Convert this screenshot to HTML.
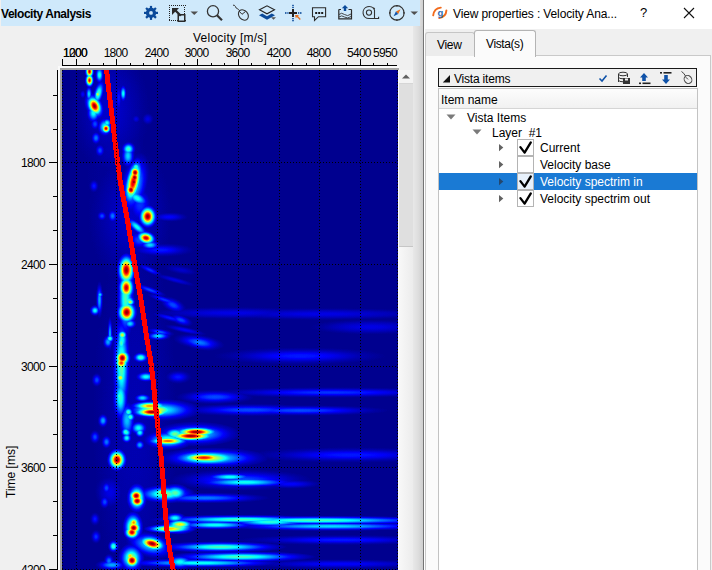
<!DOCTYPE html>
<html><head><meta charset="utf-8"><style>
html,body{margin:0;padding:0;width:712px;height:570px;overflow:hidden;background:#f0f0f0;}
body{position:relative;font-family:"Liberation Sans",sans-serif;color:#000;}
.a{position:absolute;white-space:pre;}
#tb{left:1px;top:0;width:419px;height:26px;background:#cfe9fb;}
#title{left:1px;top:6.5px;font-weight:bold;font-size:12px;letter-spacing:-0.45px;color:#000;}
.tl{font-size:12px;letter-spacing:-0.7px;line-height:13px;}
#split{left:413px;top:26px;width:10px;height:544px;background:linear-gradient(to right,#e8e8e8,#dedede 50%,#cfcfcf);}
#split2{left:420px;top:0;width:3px;height:26px;background:linear-gradient(to right,#dcdcdc,#d0d0d0);}
#sline{left:423px;top:0;width:1px;height:570px;background:#747474;}
#rp{left:424px;top:0;width:288px;height:570px;background:#f0f0f0;}
#rtitle{left:424px;top:0;width:288px;height:29px;background:#fff;}
.t12{font-size:12px;line-height:14px;}
.r12{font-size:12px;line-height:16.5px;}
</style></head><body>
<div class="a" id="tb"></div>
<div class="a" id="title">Velocity Analysis</div>
<div class="a" id="split"></div>
<div class="a" id="split2"></div>
<div class="a" id="rp"></div>
<div class="a" id="rtitle"></div>
<div class="a" id="sline"></div>
<svg class="a" style="left:0;top:0" width="420" height="26">
<g transform="translate(151,12.9)" fill="#0b4a9a"><rect x="-1.1" y="-7" width="2.2" height="3" transform="rotate(0)"/><rect x="-1.1" y="-7" width="2.2" height="3" transform="rotate(45)"/><rect x="-1.1" y="-7" width="2.2" height="3" transform="rotate(90)"/><rect x="-1.1" y="-7" width="2.2" height="3" transform="rotate(135)"/><rect x="-1.1" y="-7" width="2.2" height="3" transform="rotate(180)"/><rect x="-1.1" y="-7" width="2.2" height="3" transform="rotate(225)"/><rect x="-1.1" y="-7" width="2.2" height="3" transform="rotate(270)"/><rect x="-1.1" y="-7" width="2.2" height="3" transform="rotate(315)"/><circle r="5.1"/><circle r="1.9" fill="#cfe9fb"/></g>
<g fill="#222"><rect x="169" y="5" width="1" height="1"/><rect x="169" y="20" width="1" height="1"/><rect x="171" y="5" width="1" height="1"/><rect x="171" y="20" width="1" height="1"/><rect x="173" y="5" width="1" height="1"/><rect x="173" y="20" width="1" height="1"/><rect x="175" y="5" width="1" height="1"/><rect x="175" y="20" width="1" height="1"/><rect x="177" y="5" width="1" height="1"/><rect x="177" y="20" width="1" height="1"/><rect x="179" y="5" width="1" height="1"/><rect x="179" y="20" width="1" height="1"/><rect x="181" y="5" width="1" height="1"/><rect x="181" y="20" width="1" height="1"/><rect x="183" y="5" width="1" height="1"/><rect x="183" y="20" width="1" height="1"/><rect x="185" y="5" width="1" height="1"/><rect x="185" y="20" width="1" height="1"/><rect x="169" y="7" width="1" height="1"/><rect x="184" y="7" width="1" height="1"/><rect x="169" y="9" width="1" height="1"/><rect x="184" y="9" width="1" height="1"/><rect x="169" y="11" width="1" height="1"/><rect x="184" y="11" width="1" height="1"/><rect x="169" y="13" width="1" height="1"/><rect x="184" y="13" width="1" height="1"/><rect x="169" y="15" width="1" height="1"/><rect x="184" y="15" width="1" height="1"/><rect x="169" y="17" width="1" height="1"/><rect x="184" y="17" width="1" height="1"/><rect x="169" y="19" width="1" height="1"/><rect x="184" y="19" width="1" height="1"/></g>
<rect x="178.25" y="14.75" width="6.5" height="6.5" fill="#cfe9fb" stroke="#2a2a2a" stroke-width="1.5"/>
<path d="M172 8 L179 8 L176.8 10.2 L181.6 15 L180 16.6 L175.2 11.8 L172 15 Z" fill="#2a2a2a"/>
<path d="M190.5 11.5 L198 11.5 L194.25 15 Z" fill="#505050"/>
<g fill="none" stroke="#333">
<circle cx="213" cy="11.3" r="5.6" stroke-width="1.3"/>
<path d="M217 15.3 L222 20.3" stroke-width="2.2"/>
<path d="M233 5.2 Q234.5 4.8 235.3 6.3 Q236 8.5 237.2 8.6 Q238.5 9 239.8 11" stroke-width="1"/>
<ellipse cx="243.4" cy="15" rx="4.4" ry="5.7" transform="rotate(-40 243.4 15)" stroke-width="1.1"/>
<path d="M239.3 11.3 L242 14.3 L245.4 11.6" stroke-width="1"/>
</g>
<path d="M259.5 9.8 L267 5.8 L274.5 9.8 L267 13.8 Z" fill="none" stroke="#222" stroke-width="1.1"/>
<path d="M259 15.2 L262.2 13.4 L267 16.2 L271.8 13.4 L275 15.2 L267 19.8 Z" fill="#0b4a9a"/>
<path d="M271 17.3 L276 17.3 L273.5 19.8 Z" fill="#555"/>
<g fill="#222"><rect x="289" y="12" width="8" height="2"/><rect x="292" y="9" width="2" height="8"/></g>
<g fill="#0b4a9a"><rect x="285" y="12.2" width="1.5" height="1.6"/><rect x="287.3" y="12.2" width="1.3" height="1.6"/><rect x="298" y="12.2" width="1.3" height="1.6"/><rect x="300" y="12.2" width="1.5" height="1.6"/>
<rect x="292.2" y="4.8" width="1.6" height="1.3"/><rect x="292.2" y="6.8" width="1.6" height="1.3"/><rect x="292.2" y="18" width="1.6" height="1.3"/><rect x="292.2" y="20" width="1.6" height="1.3"/></g>
<path d="M295 15 L299 15 L297.9 16.1 L300.8 19 L299.8 20 L296.9 17.1 L295.8 18.2 Z" fill="#e8711e"/>
<path d="M312.5 7.8 H325.6 V16.7 H318.5 L314.5 20.5 V16.7 H312.5 Z" fill="none" stroke="#2a2a2a" stroke-width="1.1" stroke-linejoin="miter"/>
<g fill="#1a1a1a"><rect x="315.2" y="12" width="2" height="2"/><rect x="318.2" y="12" width="2" height="2"/><rect x="321.2" y="12" width="2" height="2"/></g>
<path d="M338.8 9.5 V18.8 H351.5 V9.5" fill="none" stroke="#2a2a2a" stroke-width="1.2"/>
<path d="M338.8 9.5 H341 M348.5 9.5 H351.5" stroke="#2a2a2a" stroke-width="1.2"/>
<path d="M339 14.5 Q341.5 12 344.5 14.5 T351 14 M339 17 Q341.5 14.8 344.5 17 T351 16.5" fill="none" stroke="#333" stroke-width="0.9"/>
<path d="M345 5 L348.2 8.2 L346.2 8.2 L346.2 11 L343.8 11 L343.8 8.2 L341.8 8.2 Z" fill="#0b4a9a"/>
<g fill="none" stroke="#333" stroke-width="1.1">
<path d="M374.5 18.5 V10 A6 6 0 1 0 369 18.5 H378.6 V16.8"/>
<circle cx="369" cy="12.6" r="2.6"/>
<path d="M373.4 7.6 L374.8 8.8"/>
</g>
<circle cx="396.9" cy="12.9" r="7.2" fill="none" stroke="#333" stroke-width="1.15"/>
<g fill="#333"><rect x="396.2" y="5" width="1.4" height="1.6"/><rect x="396.2" y="19.2" width="1.4" height="1.6"/><rect x="389.1" y="12.2" width="1.6" height="1.4"/><rect x="403.1" y="12.2" width="1.6" height="1.4"/></g>
<path d="M400.6 9.2 L398.2 13.9 L395.9 11.6 Z" fill="#e8711e"/>
<path d="M393.6 16.2 L395.9 11.6 L398.2 13.9 Z" fill="#0f52a8"/>
<path d="M410.5 11.5 L418 11.5 L414.25 15 Z" fill="#505050"/>
</svg>
<svg class="a" style="left:0;top:0" width="423" height="570"><g stroke="#000" stroke-width="1" shape-rendering="crispEdges"><line x1="62" y1="65.5" x2="397" y2="65.5"/><line x1="57.5" y1="70" x2="57.5" y2="570"/><line x1="62.5" y1="59" x2="62.5" y2="65"/><line x1="76.5" y1="59" x2="76.5" y2="65"/><line x1="89.5" y1="63" x2="89.5" y2="65"/><line x1="103.5" y1="63" x2="103.5" y2="65"/><line x1="116.5" y1="59" x2="116.5" y2="65"/><line x1="130.5" y1="63" x2="130.5" y2="65"/><line x1="143.5" y1="63" x2="143.5" y2="65"/><line x1="157.5" y1="59" x2="157.5" y2="65"/><line x1="170.5" y1="63" x2="170.5" y2="65"/><line x1="184.5" y1="63" x2="184.5" y2="65"/><line x1="197.5" y1="59" x2="197.5" y2="65"/><line x1="211.5" y1="63" x2="211.5" y2="65"/><line x1="224.5" y1="63" x2="224.5" y2="65"/><line x1="238.5" y1="59" x2="238.5" y2="65"/><line x1="251.5" y1="63" x2="251.5" y2="65"/><line x1="265.5" y1="63" x2="265.5" y2="65"/><line x1="279.5" y1="59" x2="279.5" y2="65"/><line x1="292.5" y1="63" x2="292.5" y2="65"/><line x1="306.5" y1="63" x2="306.5" y2="65"/><line x1="319.5" y1="59" x2="319.5" y2="65"/><line x1="333.5" y1="63" x2="333.5" y2="65"/><line x1="346.5" y1="63" x2="346.5" y2="65"/><line x1="360.5" y1="59" x2="360.5" y2="65"/><line x1="373.5" y1="63" x2="373.5" y2="65"/><line x1="387.5" y1="63" x2="387.5" y2="65"/><line x1="53" y1="95.5" x2="57" y2="95.5"/><line x1="53" y1="129.5" x2="57" y2="129.5"/><line x1="49" y1="162.5" x2="57" y2="162.5"/><line x1="53" y1="196.5" x2="57" y2="196.5"/><line x1="53" y1="230.5" x2="57" y2="230.5"/><line x1="49" y1="264.5" x2="57" y2="264.5"/><line x1="53" y1="298.5" x2="57" y2="298.5"/><line x1="53" y1="332.5" x2="57" y2="332.5"/><line x1="49" y1="366.5" x2="57" y2="366.5"/><line x1="53" y1="400.5" x2="57" y2="400.5"/><line x1="53" y1="434.5" x2="57" y2="434.5"/><line x1="49" y1="467.5" x2="57" y2="467.5"/><line x1="53" y1="501.5" x2="57" y2="501.5"/><line x1="53" y1="535.5" x2="57" y2="535.5"/><line x1="49" y1="569.5" x2="57" y2="569.5"/></g></svg>
<div class="a tl" style="left:100.6px;top:47px;width:30px;text-align:center">1800</div>
<div class="a tl" style="left:141.6px;top:47px;width:30px;text-align:center">2400</div>
<div class="a tl" style="left:181.6px;top:47px;width:30px;text-align:center">3000</div>
<div class="a tl" style="left:222.6px;top:47px;width:30px;text-align:center">3600</div>
<div class="a tl" style="left:263.6px;top:47px;width:30px;text-align:center">4200</div>
<div class="a tl" style="left:303.6px;top:47px;width:30px;text-align:center">4800</div>
<div class="a tl" style="left:343.9px;top:47px;width:30px;text-align:center">5400</div>
<div class="a tl" style="left:63px;top:47px">1000</div>
<div class="a tl" style="left:63px;top:47px">1200</div>
<div class="a tl" style="left:347px;top:47px;width:50px;text-align:right">5950</div>
<div class="a t12" style="left:193px;top:31px;letter-spacing:0.25px">Velocity [m/s]</div>
<div class="a tl" style="left:0px;width:45px;text-align:right;top:157.0px">1800</div>
<div class="a tl" style="left:0px;width:45px;text-align:right;top:259.0px">2400</div>
<div class="a tl" style="left:0px;width:45px;text-align:right;top:361.0px">3000</div>
<div class="a tl" style="left:0px;width:45px;text-align:right;top:462.0px">3600</div>
<div class="a tl" style="left:0px;width:45px;text-align:right;top:564.0px">4200</div>
<div class="a t12" style="left:4px;top:498px;transform-origin:0 0;transform:rotate(-90deg)">Time [ms]</div>
<div class="a" style="left:58px;top:66px;width:341px;height:504px;background:#fafafa"></div>
<div class="a" style="left:60px;top:68px;width:339px;height:502px;background:#a5a5a5"></div>
<div class="a" style="left:398px;top:70px;width:1px;height:500px;background:#fcfcfc"></div>
<div class="a" style="left:399px;top:70px;width:14px;height:13px;background:#f4f4f4;border-bottom:1px solid #d6d6d6"></div>
<svg class="a" style="left:399px;top:70px" width="14" height="13"><path d="M3 8.5 L11 8.5 L7 4.5 Z" fill="#606060"/></svg>
<div class="a" style="left:399px;top:84px;width:14px;height:162px;background:#dfdfdf;border-bottom:1px solid #c6c6c6"></div>
<div class="a" style="left:399px;top:247px;width:14px;height:323px;background:linear-gradient(to right,#f8f8f8,#ececec)"></div>
<svg class="a" style="left:62px;top:70px" width="336" height="500" viewBox="0 0 336 500"><defs><radialGradient id="g1"><stop offset="0" stop-color="rgb(6,6,6)"/><stop offset="0.15" stop-color="rgb(6,6,6)"/><stop offset="0.3" stop-color="rgb(5,5,5)"/><stop offset="0.45" stop-color="rgb(3,3,3)"/><stop offset="0.6" stop-color="rgb(2,2,2)"/><stop offset="0.75" stop-color="rgb(1,1,1)"/><stop offset="0.9" stop-color="rgb(1,1,1)"/><stop offset="1" stop-color="rgb(0,0,0)"/></radialGradient><radialGradient id="g2"><stop offset="0" stop-color="rgb(13,13,13)"/><stop offset="0.15" stop-color="rgb(12,12,12)"/><stop offset="0.3" stop-color="rgb(10,10,10)"/><stop offset="0.45" stop-color="rgb(7,7,7)"/><stop offset="0.6" stop-color="rgb(4,4,4)"/><stop offset="0.75" stop-color="rgb(2,2,2)"/><stop offset="0.9" stop-color="rgb(1,1,1)"/><stop offset="1" stop-color="rgb(0,0,0)"/></radialGradient><radialGradient id="g3"><stop offset="0" stop-color="rgb(19,19,19)"/><stop offset="0.15" stop-color="rgb(18,18,18)"/><stop offset="0.3" stop-color="rgb(14,14,14)"/><stop offset="0.45" stop-color="rgb(10,10,10)"/><stop offset="0.6" stop-color="rgb(6,6,6)"/><stop offset="0.75" stop-color="rgb(3,3,3)"/><stop offset="0.9" stop-color="rgb(2,2,2)"/><stop offset="1" stop-color="rgb(0,0,0)"/></radialGradient><radialGradient id="g4"><stop offset="0" stop-color="rgb(26,26,26)"/><stop offset="0.15" stop-color="rgb(24,24,24)"/><stop offset="0.3" stop-color="rgb(19,19,19)"/><stop offset="0.45" stop-color="rgb(14,14,14)"/><stop offset="0.6" stop-color="rgb(8,8,8)"/><stop offset="0.75" stop-color="rgb(4,4,4)"/><stop offset="0.9" stop-color="rgb(2,2,2)"/><stop offset="1" stop-color="rgb(0,0,0)"/></radialGradient><radialGradient id="g5"><stop offset="0" stop-color="rgb(32,32,32)"/><stop offset="0.15" stop-color="rgb(30,30,30)"/><stop offset="0.3" stop-color="rgb(24,24,24)"/><stop offset="0.45" stop-color="rgb(17,17,17)"/><stop offset="0.6" stop-color="rgb(10,10,10)"/><stop offset="0.75" stop-color="rgb(5,5,5)"/><stop offset="0.9" stop-color="rgb(3,3,3)"/><stop offset="1" stop-color="rgb(0,0,0)"/></radialGradient><radialGradient id="g6"><stop offset="0" stop-color="rgb(38,38,38)"/><stop offset="0.15" stop-color="rgb(36,36,36)"/><stop offset="0.3" stop-color="rgb(29,29,29)"/><stop offset="0.45" stop-color="rgb(20,20,20)"/><stop offset="0.6" stop-color="rgb(12,12,12)"/><stop offset="0.75" stop-color="rgb(7,7,7)"/><stop offset="0.9" stop-color="rgb(3,3,3)"/><stop offset="1" stop-color="rgb(0,0,0)"/></radialGradient><radialGradient id="g7"><stop offset="0" stop-color="rgb(45,45,45)"/><stop offset="0.15" stop-color="rgb(42,42,42)"/><stop offset="0.3" stop-color="rgb(34,34,34)"/><stop offset="0.45" stop-color="rgb(24,24,24)"/><stop offset="0.6" stop-color="rgb(15,15,15)"/><stop offset="0.75" stop-color="rgb(8,8,8)"/><stop offset="0.9" stop-color="rgb(4,4,4)"/><stop offset="1" stop-color="rgb(0,0,0)"/></radialGradient><radialGradient id="g8"><stop offset="0" stop-color="rgb(51,51,51)"/><stop offset="0.15" stop-color="rgb(48,48,48)"/><stop offset="0.3" stop-color="rgb(39,39,39)"/><stop offset="0.45" stop-color="rgb(27,27,27)"/><stop offset="0.6" stop-color="rgb(17,17,17)"/><stop offset="0.75" stop-color="rgb(9,9,9)"/><stop offset="0.9" stop-color="rgb(4,4,4)"/><stop offset="1" stop-color="rgb(0,0,0)"/></radialGradient><radialGradient id="g9"><stop offset="0" stop-color="rgb(57,57,57)"/><stop offset="0.15" stop-color="rgb(53,53,53)"/><stop offset="0.3" stop-color="rgb(43,43,43)"/><stop offset="0.45" stop-color="rgb(30,30,30)"/><stop offset="0.6" stop-color="rgb(19,19,19)"/><stop offset="0.75" stop-color="rgb(10,10,10)"/><stop offset="0.9" stop-color="rgb(5,5,5)"/><stop offset="1" stop-color="rgb(0,0,0)"/></radialGradient><radialGradient id="g10"><stop offset="0" stop-color="rgb(64,64,64)"/><stop offset="0.15" stop-color="rgb(59,59,59)"/><stop offset="0.3" stop-color="rgb(48,48,48)"/><stop offset="0.45" stop-color="rgb(34,34,34)"/><stop offset="0.6" stop-color="rgb(21,21,21)"/><stop offset="0.75" stop-color="rgb(11,11,11)"/><stop offset="0.9" stop-color="rgb(5,5,5)"/><stop offset="1" stop-color="rgb(0,0,0)"/></radialGradient><radialGradient id="g12"><stop offset="0" stop-color="rgb(76,76,76)"/><stop offset="0.15" stop-color="rgb(71,71,71)"/><stop offset="0.3" stop-color="rgb(58,58,58)"/><stop offset="0.45" stop-color="rgb(41,41,41)"/><stop offset="0.6" stop-color="rgb(25,25,25)"/><stop offset="0.75" stop-color="rgb(13,13,13)"/><stop offset="0.9" stop-color="rgb(6,6,6)"/><stop offset="1" stop-color="rgb(0,0,0)"/></radialGradient><radialGradient id="g13"><stop offset="0" stop-color="rgb(83,83,83)"/><stop offset="0.15" stop-color="rgb(77,77,77)"/><stop offset="0.3" stop-color="rgb(63,63,63)"/><stop offset="0.45" stop-color="rgb(44,44,44)"/><stop offset="0.6" stop-color="rgb(27,27,27)"/><stop offset="0.75" stop-color="rgb(14,14,14)"/><stop offset="0.9" stop-color="rgb(7,7,7)"/><stop offset="1" stop-color="rgb(0,0,0)"/></radialGradient><radialGradient id="g14"><stop offset="0" stop-color="rgb(89,89,89)"/><stop offset="0.15" stop-color="rgb(83,83,83)"/><stop offset="0.3" stop-color="rgb(67,67,67)"/><stop offset="0.45" stop-color="rgb(47,47,47)"/><stop offset="0.6" stop-color="rgb(29,29,29)"/><stop offset="0.75" stop-color="rgb(15,15,15)"/><stop offset="0.9" stop-color="rgb(7,7,7)"/><stop offset="1" stop-color="rgb(0,0,0)"/></radialGradient><radialGradient id="g15"><stop offset="0" stop-color="rgb(96,96,96)"/><stop offset="0.15" stop-color="rgb(89,89,89)"/><stop offset="0.3" stop-color="rgb(72,72,72)"/><stop offset="0.45" stop-color="rgb(51,51,51)"/><stop offset="0.6" stop-color="rgb(31,31,31)"/><stop offset="0.75" stop-color="rgb(16,16,16)"/><stop offset="0.9" stop-color="rgb(8,8,8)"/><stop offset="1" stop-color="rgb(0,0,0)"/></radialGradient><radialGradient id="g16"><stop offset="0" stop-color="rgb(102,102,102)"/><stop offset="0.15" stop-color="rgb(95,95,95)"/><stop offset="0.3" stop-color="rgb(77,77,77)"/><stop offset="0.45" stop-color="rgb(54,54,54)"/><stop offset="0.6" stop-color="rgb(33,33,33)"/><stop offset="0.75" stop-color="rgb(18,18,18)"/><stop offset="0.9" stop-color="rgb(8,8,8)"/><stop offset="1" stop-color="rgb(0,0,0)"/></radialGradient><radialGradient id="g17"><stop offset="0" stop-color="rgb(108,108,108)"/><stop offset="0.15" stop-color="rgb(101,101,101)"/><stop offset="0.3" stop-color="rgb(82,82,82)"/><stop offset="0.45" stop-color="rgb(57,57,57)"/><stop offset="0.6" stop-color="rgb(35,35,35)"/><stop offset="0.75" stop-color="rgb(19,19,19)"/><stop offset="0.9" stop-color="rgb(9,9,9)"/><stop offset="1" stop-color="rgb(0,0,0)"/></radialGradient><radialGradient id="g18"><stop offset="0" stop-color="rgb(115,115,115)"/><stop offset="0.15" stop-color="rgb(107,107,107)"/><stop offset="0.3" stop-color="rgb(87,87,87)"/><stop offset="0.45" stop-color="rgb(61,61,61)"/><stop offset="0.6" stop-color="rgb(37,37,37)"/><stop offset="0.75" stop-color="rgb(20,20,20)"/><stop offset="0.9" stop-color="rgb(9,9,9)"/><stop offset="1" stop-color="rgb(0,0,0)"/></radialGradient><radialGradient id="g19"><stop offset="0" stop-color="rgb(121,121,121)"/><stop offset="0.15" stop-color="rgb(113,113,113)"/><stop offset="0.3" stop-color="rgb(91,91,91)"/><stop offset="0.45" stop-color="rgb(64,64,64)"/><stop offset="0.6" stop-color="rgb(39,39,39)"/><stop offset="0.75" stop-color="rgb(21,21,21)"/><stop offset="0.9" stop-color="rgb(10,10,10)"/><stop offset="1" stop-color="rgb(0,0,0)"/></radialGradient><radialGradient id="g20"><stop offset="0" stop-color="rgb(128,128,128)"/><stop offset="0.15" stop-color="rgb(119,119,119)"/><stop offset="0.3" stop-color="rgb(96,96,96)"/><stop offset="0.45" stop-color="rgb(68,68,68)"/><stop offset="0.6" stop-color="rgb(41,41,41)"/><stop offset="0.75" stop-color="rgb(22,22,22)"/><stop offset="0.9" stop-color="rgb(10,10,10)"/><stop offset="1" stop-color="rgb(0,0,0)"/></radialGradient><radialGradient id="g22"><stop offset="0" stop-color="rgb(140,140,140)"/><stop offset="0.15" stop-color="rgb(131,131,131)"/><stop offset="0.3" stop-color="rgb(106,106,106)"/><stop offset="0.45" stop-color="rgb(74,74,74)"/><stop offset="0.6" stop-color="rgb(46,46,46)"/><stop offset="0.75" stop-color="rgb(24,24,24)"/><stop offset="0.9" stop-color="rgb(11,11,11)"/><stop offset="1" stop-color="rgb(0,0,0)"/></radialGradient><radialGradient id="g23"><stop offset="0" stop-color="rgb(147,147,147)"/><stop offset="0.15" stop-color="rgb(137,137,137)"/><stop offset="0.3" stop-color="rgb(111,111,111)"/><stop offset="0.45" stop-color="rgb(78,78,78)"/><stop offset="0.6" stop-color="rgb(48,48,48)"/><stop offset="0.75" stop-color="rgb(25,25,25)"/><stop offset="0.9" stop-color="rgb(12,12,12)"/><stop offset="1" stop-color="rgb(0,0,0)"/></radialGradient><radialGradient id="g24"><stop offset="0" stop-color="rgb(153,153,153)"/><stop offset="0.15" stop-color="rgb(143,143,143)"/><stop offset="0.3" stop-color="rgb(116,116,116)"/><stop offset="0.45" stop-color="rgb(81,81,81)"/><stop offset="0.6" stop-color="rgb(50,50,50)"/><stop offset="0.75" stop-color="rgb(26,26,26)"/><stop offset="0.9" stop-color="rgb(12,12,12)"/><stop offset="1" stop-color="rgb(0,0,0)"/></radialGradient><radialGradient id="g25"><stop offset="0" stop-color="rgb(159,159,159)"/><stop offset="0.15" stop-color="rgb(149,149,149)"/><stop offset="0.3" stop-color="rgb(120,120,120)"/><stop offset="0.45" stop-color="rgb(84,84,84)"/><stop offset="0.6" stop-color="rgb(52,52,52)"/><stop offset="0.75" stop-color="rgb(27,27,27)"/><stop offset="0.9" stop-color="rgb(13,13,13)"/><stop offset="1" stop-color="rgb(0,0,0)"/></radialGradient><radialGradient id="g26"><stop offset="0" stop-color="rgb(166,166,166)"/><stop offset="0.15" stop-color="rgb(154,154,154)"/><stop offset="0.3" stop-color="rgb(125,125,125)"/><stop offset="0.45" stop-color="rgb(88,88,88)"/><stop offset="0.6" stop-color="rgb(54,54,54)"/><stop offset="0.75" stop-color="rgb(29,29,29)"/><stop offset="0.9" stop-color="rgb(13,13,13)"/><stop offset="1" stop-color="rgb(0,0,0)"/></radialGradient><radialGradient id="g27"><stop offset="0" stop-color="rgb(172,172,172)"/><stop offset="0.15" stop-color="rgb(160,160,160)"/><stop offset="0.3" stop-color="rgb(130,130,130)"/><stop offset="0.45" stop-color="rgb(91,91,91)"/><stop offset="0.6" stop-color="rgb(56,56,56)"/><stop offset="0.75" stop-color="rgb(30,30,30)"/><stop offset="0.9" stop-color="rgb(14,14,14)"/><stop offset="1" stop-color="rgb(0,0,0)"/></radialGradient><radialGradient id="g28"><stop offset="0" stop-color="rgb(178,178,178)"/><stop offset="0.15" stop-color="rgb(166,166,166)"/><stop offset="0.3" stop-color="rgb(135,135,135)"/><stop offset="0.45" stop-color="rgb(95,95,95)"/><stop offset="0.6" stop-color="rgb(58,58,58)"/><stop offset="0.75" stop-color="rgb(31,31,31)"/><stop offset="0.9" stop-color="rgb(14,14,14)"/><stop offset="1" stop-color="rgb(0,0,0)"/></radialGradient><radialGradient id="g30"><stop offset="0" stop-color="rgb(191,191,191)"/><stop offset="0.15" stop-color="rgb(178,178,178)"/><stop offset="0.3" stop-color="rgb(144,144,144)"/><stop offset="0.45" stop-color="rgb(101,101,101)"/><stop offset="0.6" stop-color="rgb(62,62,62)"/><stop offset="0.75" stop-color="rgb(33,33,33)"/><stop offset="0.9" stop-color="rgb(15,15,15)"/><stop offset="1" stop-color="rgb(0,0,0)"/></radialGradient><radialGradient id="g32"><stop offset="0" stop-color="rgb(204,204,204)"/><stop offset="0.15" stop-color="rgb(190,190,190)"/><stop offset="0.3" stop-color="rgb(154,154,154)"/><stop offset="0.45" stop-color="rgb(108,108,108)"/><stop offset="0.6" stop-color="rgb(66,66,66)"/><stop offset="0.75" stop-color="rgb(35,35,35)"/><stop offset="0.9" stop-color="rgb(16,16,16)"/><stop offset="1" stop-color="rgb(0,0,0)"/></radialGradient><radialGradient id="g34"><stop offset="0" stop-color="rgb(217,217,217)"/><stop offset="0.15" stop-color="rgb(202,202,202)"/><stop offset="0.3" stop-color="rgb(164,164,164)"/><stop offset="0.45" stop-color="rgb(115,115,115)"/><stop offset="0.6" stop-color="rgb(70,70,70)"/><stop offset="0.75" stop-color="rgb(37,37,37)"/><stop offset="0.9" stop-color="rgb(17,17,17)"/><stop offset="1" stop-color="rgb(0,0,0)"/></radialGradient><radialGradient id="g35"><stop offset="0" stop-color="rgb(223,223,223)"/><stop offset="0.15" stop-color="rgb(208,208,208)"/><stop offset="0.3" stop-color="rgb(168,168,168)"/><stop offset="0.45" stop-color="rgb(118,118,118)"/><stop offset="0.6" stop-color="rgb(73,73,73)"/><stop offset="0.75" stop-color="rgb(38,38,38)"/><stop offset="0.9" stop-color="rgb(18,18,18)"/><stop offset="1" stop-color="rgb(0,0,0)"/></radialGradient><radialGradient id="g36"><stop offset="0" stop-color="rgb(230,230,230)"/><stop offset="0.15" stop-color="rgb(214,214,214)"/><stop offset="0.3" stop-color="rgb(173,173,173)"/><stop offset="0.45" stop-color="rgb(122,122,122)"/><stop offset="0.6" stop-color="rgb(75,75,75)"/><stop offset="0.75" stop-color="rgb(39,39,39)"/><stop offset="0.9" stop-color="rgb(18,18,18)"/><stop offset="1" stop-color="rgb(0,0,0)"/></radialGradient><radialGradient id="g37"><stop offset="0" stop-color="rgb(236,236,236)"/><stop offset="0.15" stop-color="rgb(220,220,220)"/><stop offset="0.3" stop-color="rgb(178,178,178)"/><stop offset="0.45" stop-color="rgb(125,125,125)"/><stop offset="0.6" stop-color="rgb(77,77,77)"/><stop offset="0.75" stop-color="rgb(41,41,41)"/><stop offset="0.9" stop-color="rgb(19,19,19)"/><stop offset="1" stop-color="rgb(0,0,0)"/></radialGradient><radialGradient id="g38"><stop offset="0" stop-color="rgb(242,242,242)"/><stop offset="0.15" stop-color="rgb(226,226,226)"/><stop offset="0.3" stop-color="rgb(183,183,183)"/><stop offset="0.45" stop-color="rgb(128,128,128)"/><stop offset="0.6" stop-color="rgb(79,79,79)"/><stop offset="0.75" stop-color="rgb(42,42,42)"/><stop offset="0.9" stop-color="rgb(19,19,19)"/><stop offset="1" stop-color="rgb(0,0,0)"/></radialGradient><radialGradient id="g40"><stop offset="0" stop-color="rgb(255,255,255)"/><stop offset="0.15" stop-color="rgb(238,238,238)"/><stop offset="0.3" stop-color="rgb(193,193,193)"/><stop offset="0.45" stop-color="rgb(135,135,135)"/><stop offset="0.6" stop-color="rgb(83,83,83)"/><stop offset="0.75" stop-color="rgb(44,44,44)"/><stop offset="0.9" stop-color="rgb(20,20,20)"/><stop offset="1" stop-color="rgb(0,0,0)"/></radialGradient><filter id="jet" x="0" y="0" width="336" height="500" filterUnits="userSpaceOnUse" color-interpolation-filters="sRGB"><feGaussianBlur stdDeviation="0.7"/><feComponentTransfer><feFuncR type="table" tableValues="0 0 0 0 0.5 1 1 1 0.5"/><feFuncG type="table" tableValues="0 0 0.5 1 1 1 0.5 0 0"/><feFuncB type="table" tableValues="0.5 1 1 1 0.5 0 0 0 0"/></feComponentTransfer></filter></defs><g filter="url(#jet)"><rect x="-5" y="-5" width="346" height="510" fill="rgb(4,4,4)"/><ellipse cx="50.0" cy="130.0" rx="60.0" ry="280.0" fill="url(#g1)" style="mix-blend-mode:lighten" transform="rotate(-8 50.0 130.0)"/><ellipse cx="73.0" cy="350.0" rx="70.0" ry="320.0" fill="url(#g2)" style="mix-blend-mode:lighten"/><ellipse cx="58.0" cy="250.0" rx="44.0" ry="120.0" fill="url(#g1)" style="mix-blend-mode:lighten"/><ellipse cx="27.5" cy="1.5" rx="5.0" ry="8.0" fill="url(#g38)" style="mix-blend-mode:lighten"/><ellipse cx="27.5" cy="10.3" rx="5.0" ry="8.0" fill="url(#g36)" style="mix-blend-mode:lighten"/><ellipse cx="27.5" cy="6.0" rx="3.0" ry="10.0" fill="url(#g16)" style="mix-blend-mode:lighten"/><ellipse cx="37.5" cy="5.0" rx="5.0" ry="10.0" fill="url(#g17)" style="mix-blend-mode:lighten"/><ellipse cx="36.5" cy="23.5" rx="6.0" ry="16.0" fill="url(#g18)" style="mix-blend-mode:lighten" transform="rotate(15 36.5 23.5)"/><ellipse cx="35.7" cy="24.3" rx="4.0" ry="5.0" fill="url(#g24)" style="mix-blend-mode:lighten"/><ellipse cx="31.5" cy="43.0" rx="8.0" ry="12.0" fill="url(#g16)" style="mix-blend-mode:lighten"/><ellipse cx="32.5" cy="36.0" rx="10.0" ry="16.0" fill="url(#g24)" style="mix-blend-mode:lighten" transform="rotate(-25 32.5 36.0)"/><ellipse cx="32.5" cy="36.0" rx="8.4" ry="13.0" fill="url(#g40)" style="mix-blend-mode:lighten" transform="rotate(-25 32.5 36.0)"/><ellipse cx="43.0" cy="57.0" rx="9.0" ry="11.0" fill="url(#g17)" style="mix-blend-mode:lighten"/><ellipse cx="44.0" cy="58.5" rx="5.6" ry="6.0" fill="url(#g38)" style="mix-blend-mode:lighten"/><ellipse cx="45.0" cy="53.0" rx="6.0" ry="6.0" fill="url(#g16)" style="mix-blend-mode:lighten"/><ellipse cx="61.2" cy="23.5" rx="4.0" ry="10.0" fill="url(#g16)" style="mix-blend-mode:lighten"/><ellipse cx="66.0" cy="86.0" rx="8.0" ry="14.0" fill="url(#g14)" style="mix-blend-mode:lighten"/><ellipse cx="66.4" cy="79.0" rx="8.0" ry="8.0" fill="url(#g18)" style="mix-blend-mode:lighten"/><ellipse cx="27.0" cy="24.0" rx="4.0" ry="10.0" fill="url(#g14)" style="mix-blend-mode:lighten"/><ellipse cx="74.0" cy="97.0" rx="6.0" ry="6.0" fill="url(#g16)" style="mix-blend-mode:lighten"/><ellipse cx="20.8" cy="24.3" rx="4.0" ry="6.0" fill="url(#g5)" style="mix-blend-mode:lighten"/><ellipse cx="33.0" cy="54.0" rx="6.0" ry="8.0" fill="url(#g8)" style="mix-blend-mode:lighten"/><ellipse cx="34.0" cy="68.0" rx="6.0" ry="8.0" fill="url(#g10)" style="mix-blend-mode:lighten"/><ellipse cx="38.0" cy="80.5" rx="6.0" ry="8.0" fill="url(#g8)" style="mix-blend-mode:lighten"/><ellipse cx="56.8" cy="28.0" rx="4.0" ry="20.0" fill="url(#g6)" style="mix-blend-mode:lighten"/><ellipse cx="85.7" cy="49.0" rx="8.0" ry="8.0" fill="url(#g4)" style="mix-blend-mode:lighten"/><ellipse cx="74.0" cy="49.0" rx="6.0" ry="6.0" fill="url(#g4)" style="mix-blend-mode:lighten"/><ellipse cx="48.0" cy="40.0" rx="56.0" ry="90.0" fill="url(#g3)" style="mix-blend-mode:lighten"/><ellipse cx="53.0" cy="80.0" rx="50.0" ry="40.0" fill="url(#g2)" style="mix-blend-mode:lighten"/><ellipse cx="72.0" cy="115.0" rx="16.0" ry="36.0" fill="url(#g14)" style="mix-blend-mode:lighten" transform="rotate(12 72.0 115.0)"/><ellipse cx="71.3" cy="112.0" rx="9.2" ry="27.0" fill="url(#g37)" style="mix-blend-mode:lighten" transform="rotate(12 71.3 112.0)"/><ellipse cx="73.1" cy="102.6" rx="7.0" ry="8.0" fill="url(#g40)" style="mix-blend-mode:lighten"/><ellipse cx="72.6" cy="107.5" rx="7.0" ry="8.0" fill="url(#g40)" style="mix-blend-mode:lighten"/><ellipse cx="71.7" cy="112.0" rx="7.0" ry="8.0" fill="url(#g40)" style="mix-blend-mode:lighten"/><ellipse cx="69.0" cy="119.8" rx="7.0" ry="8.0" fill="url(#g40)" style="mix-blend-mode:lighten"/><ellipse cx="75.0" cy="128.0" rx="16.0" ry="8.0" fill="url(#g16)" style="mix-blend-mode:lighten" transform="rotate(30 75.0 128.0)"/><ellipse cx="74.0" cy="97.0" rx="6.0" ry="6.0" fill="url(#g18)" style="mix-blend-mode:lighten"/><ellipse cx="75.0" cy="157.0" rx="16.0" ry="6.0" fill="url(#g16)" style="mix-blend-mode:lighten" transform="rotate(40 75.0 157.0)"/><ellipse cx="85.7" cy="146.5" rx="10.0" ry="12.4" fill="url(#g40)" style="mix-blend-mode:lighten"/><ellipse cx="88.0" cy="175.0" rx="12.0" ry="6.0" fill="url(#g14)" style="mix-blend-mode:lighten"/><ellipse cx="84.0" cy="168.0" rx="11.0" ry="7.6" fill="url(#g38)" style="mix-blend-mode:lighten" transform="rotate(15 84.0 168.0)"/><ellipse cx="50.6" cy="146.0" rx="6.0" ry="8.0" fill="url(#g10)" style="mix-blend-mode:lighten"/><ellipse cx="40.0" cy="146.0" rx="6.0" ry="6.0" fill="url(#g8)" style="mix-blend-mode:lighten"/><ellipse cx="32.0" cy="116.0" rx="6.0" ry="8.0" fill="url(#g6)" style="mix-blend-mode:lighten"/><ellipse cx="107.0" cy="147.0" rx="24.0" ry="6.0" fill="url(#g5)" style="mix-blend-mode:lighten"/><ellipse cx="98.0" cy="180.0" rx="40.0" ry="8.0" fill="url(#g6)" style="mix-blend-mode:lighten"/><ellipse cx="68.0" cy="145.0" rx="60.0" ry="100.0" fill="url(#g3)" style="mix-blend-mode:lighten"/><ellipse cx="64.3" cy="200.0" rx="10.0" ry="18.0" fill="url(#g40)" style="mix-blend-mode:lighten"/><ellipse cx="64.3" cy="217.7" rx="9.0" ry="14.0" fill="url(#g38)" style="mix-blend-mode:lighten"/><ellipse cx="66.4" cy="231.0" rx="8.0" ry="8.0" fill="url(#g18)" style="mix-blend-mode:lighten"/><ellipse cx="68.0" cy="232.0" rx="6.0" ry="5.0" fill="url(#g23)" style="mix-blend-mode:lighten"/><ellipse cx="64.7" cy="242.3" rx="11.0" ry="13.0" fill="url(#g40)" style="mix-blend-mode:lighten"/><ellipse cx="68.0" cy="253.7" rx="8.0" ry="6.0" fill="url(#g14)" style="mix-blend-mode:lighten"/><ellipse cx="60.0" cy="270.0" rx="8.0" ry="18.0" fill="url(#g16)" style="mix-blend-mode:lighten"/><ellipse cx="60.3" cy="265.0" rx="6.0" ry="6.0" fill="url(#g24)" style="mix-blend-mode:lighten"/><ellipse cx="33.0" cy="240.5" rx="6.0" ry="6.0" fill="url(#g16)" style="mix-blend-mode:lighten"/><ellipse cx="37.5" cy="230.0" rx="4.0" ry="20.0" fill="url(#g12)" style="mix-blend-mode:lighten"/><ellipse cx="38.0" cy="224.7" rx="4.0" ry="4.0" fill="url(#g14)" style="mix-blend-mode:lighten"/><ellipse cx="48.0" cy="264.0" rx="3.0" ry="20.0" fill="url(#g12)" style="mix-blend-mode:lighten"/><ellipse cx="48.0" cy="268.6" rx="5.0" ry="5.0" fill="url(#g18)" style="mix-blend-mode:lighten"/><ellipse cx="96.2" cy="266.0" rx="14.0" ry="5.0" fill="url(#g14)" style="mix-blend-mode:lighten"/><ellipse cx="111.0" cy="235.0" rx="16.0" ry="8.0" fill="url(#g8)" style="mix-blend-mode:lighten" transform="rotate(25 111.0 235.0)"/><ellipse cx="119.0" cy="250.0" rx="14.0" ry="6.0" fill="url(#g8)" style="mix-blend-mode:lighten" transform="rotate(20 119.0 250.0)"/><ellipse cx="168.0" cy="243.0" rx="120.0" ry="8.0" fill="url(#g4)" style="mix-blend-mode:lighten"/><ellipse cx="137.0" cy="272.0" rx="28.0" ry="8.0" fill="url(#g9)" style="mix-blend-mode:lighten" transform="rotate(8 137.0 272.0)"/><ellipse cx="119.0" cy="200.0" rx="24.0" ry="6.0" fill="url(#g3)" style="mix-blend-mode:lighten" transform="rotate(10 119.0 200.0)"/><ellipse cx="88.0" cy="220.0" rx="20.0" ry="4.0" fill="url(#g8)" style="mix-blend-mode:lighten" transform="rotate(20 88.0 220.0)"/><ellipse cx="103.0" cy="230.0" rx="24.0" ry="4.0" fill="url(#g7)" style="mix-blend-mode:lighten" transform="rotate(18 103.0 230.0)"/><ellipse cx="108.0" cy="248.0" rx="24.0" ry="4.0" fill="url(#g6)" style="mix-blend-mode:lighten" transform="rotate(15 108.0 248.0)"/><ellipse cx="98.0" cy="262.0" rx="16.0" ry="4.0" fill="url(#g9)" style="mix-blend-mode:lighten" transform="rotate(10 98.0 262.0)"/><ellipse cx="123.0" cy="260.0" rx="28.0" ry="4.0" fill="url(#g5)" style="mix-blend-mode:lighten" transform="rotate(12 123.0 260.0)"/><ellipse cx="88.0" cy="200.0" rx="16.0" ry="4.0" fill="url(#g7)" style="mix-blend-mode:lighten" transform="rotate(25 88.0 200.0)"/><ellipse cx="113.0" cy="210.0" rx="28.0" ry="4.0" fill="url(#g4)" style="mix-blend-mode:lighten" transform="rotate(15 113.0 210.0)"/><ellipse cx="78.0" cy="170.0" rx="16.0" ry="12.0" fill="url(#g8)" style="mix-blend-mode:lighten"/><ellipse cx="78.0" cy="135.0" rx="16.0" ry="24.0" fill="url(#g7)" style="mix-blend-mode:lighten"/><ellipse cx="63.5" cy="228.0" rx="10.0" ry="48.0" fill="url(#g18)" style="mix-blend-mode:lighten"/><ellipse cx="59.5" cy="295.0" rx="10.0" ry="60.0" fill="url(#g19)" style="mix-blend-mode:lighten"/><ellipse cx="58.5" cy="328.0" rx="9.0" ry="28.0" fill="url(#g17)" style="mix-blend-mode:lighten"/><ellipse cx="65.0" cy="350.0" rx="10.0" ry="24.0" fill="url(#g13)" style="mix-blend-mode:lighten"/><ellipse cx="59.4" cy="273.0" rx="6.0" ry="12.0" fill="url(#g18)" style="mix-blend-mode:lighten"/><ellipse cx="60.3" cy="288.0" rx="9.0" ry="10.0" fill="url(#g40)" style="mix-blend-mode:lighten"/><ellipse cx="59.4" cy="293.0" rx="8.0" ry="8.0" fill="url(#g34)" style="mix-blend-mode:lighten"/><ellipse cx="59.0" cy="308.0" rx="8.0" ry="18.0" fill="url(#g16)" style="mix-blend-mode:lighten"/><ellipse cx="58.5" cy="307.7" rx="6.0" ry="6.0" fill="url(#g26)" style="mix-blend-mode:lighten"/><ellipse cx="57.6" cy="326.0" rx="6.0" ry="8.0" fill="url(#g18)" style="mix-blend-mode:lighten"/><ellipse cx="66.4" cy="342.0" rx="6.0" ry="6.0" fill="url(#g18)" style="mix-blend-mode:lighten"/><ellipse cx="68.2" cy="347.0" rx="6.0" ry="6.0" fill="url(#g18)" style="mix-blend-mode:lighten"/><ellipse cx="63.8" cy="362.0" rx="6.0" ry="6.0" fill="url(#g18)" style="mix-blend-mode:lighten"/><ellipse cx="78.7" cy="287.5" rx="9.0" ry="6.0" fill="url(#g18)" style="mix-blend-mode:lighten"/><ellipse cx="84.0" cy="306.8" rx="12.0" ry="6.0" fill="url(#g16)" style="mix-blend-mode:lighten"/><ellipse cx="80.5" cy="328.0" rx="10.0" ry="5.0" fill="url(#g14)" style="mix-blend-mode:lighten"/><ellipse cx="98.0" cy="340.0" rx="44.0" ry="12.0" fill="url(#g16)" style="mix-blend-mode:lighten"/><ellipse cx="93.0" cy="340.0" rx="30.0" ry="9.0" fill="url(#g26)" style="mix-blend-mode:lighten"/><ellipse cx="88.0" cy="336.0" rx="22.0" ry="5.6" fill="url(#g30)" style="mix-blend-mode:lighten"/><ellipse cx="90.0" cy="342.0" rx="22.0" ry="6.0" fill="url(#g40)" style="mix-blend-mode:lighten"/><ellipse cx="76.5" cy="358.0" rx="10.0" ry="8.0" fill="url(#g16)" style="mix-blend-mode:lighten"/><ellipse cx="113.0" cy="364.0" rx="14.0" ry="8.0" fill="url(#g20)" style="mix-blend-mode:lighten"/><ellipse cx="34.8" cy="310.0" rx="6.0" ry="8.0" fill="url(#g8)" style="mix-blend-mode:lighten"/><ellipse cx="41.0" cy="350.7" rx="6.0" ry="8.0" fill="url(#g12)" style="mix-blend-mode:lighten"/><ellipse cx="46.0" cy="272.0" rx="6.0" ry="8.0" fill="url(#g12)" style="mix-blend-mode:lighten"/><ellipse cx="55.0" cy="389.8" rx="10.4" ry="12.0" fill="url(#g40)" style="mix-blend-mode:lighten"/><ellipse cx="74.8" cy="428.0" rx="11.0" ry="16.0" fill="url(#g27)" style="mix-blend-mode:lighten"/><ellipse cx="74.3" cy="425.8" rx="9.0" ry="8.0" fill="url(#g40)" style="mix-blend-mode:lighten"/><ellipse cx="75.2" cy="431.0" rx="9.0" ry="8.0" fill="url(#g40)" style="mix-blend-mode:lighten"/><ellipse cx="71.0" cy="457.0" rx="11.0" ry="17.0" fill="url(#g27)" style="mix-blend-mode:lighten"/><ellipse cx="71.7" cy="452.6" rx="7.0" ry="7.0" fill="url(#g30)" style="mix-blend-mode:lighten"/><ellipse cx="71.7" cy="457.9" rx="9.0" ry="8.0" fill="url(#g40)" style="mix-blend-mode:lighten"/><ellipse cx="70.0" cy="462.3" rx="9.0" ry="8.0" fill="url(#g38)" style="mix-blend-mode:lighten"/><ellipse cx="64.7" cy="362.6" rx="6.0" ry="6.0" fill="url(#g16)" style="mix-blend-mode:lighten"/><ellipse cx="64.7" cy="368.0" rx="6.0" ry="6.0" fill="url(#g16)" style="mix-blend-mode:lighten"/><ellipse cx="77.8" cy="362.6" rx="6.0" ry="6.0" fill="url(#g16)" style="mix-blend-mode:lighten"/><ellipse cx="77.8" cy="375.0" rx="6.0" ry="6.0" fill="url(#g12)" style="mix-blend-mode:lighten"/><ellipse cx="106.0" cy="370.0" rx="28.0" ry="11.0" fill="url(#g18)" style="mix-blend-mode:lighten"/><ellipse cx="106.0" cy="371.0" rx="24.0" ry="5.6" fill="url(#g32)" style="mix-blend-mode:lighten"/><ellipse cx="103.0" cy="424.0" rx="32.0" ry="10.0" fill="url(#g20)" style="mix-blend-mode:lighten"/><ellipse cx="100.0" cy="422.0" rx="12.0" ry="4.0" fill="url(#g24)" style="mix-blend-mode:lighten"/><ellipse cx="116.0" cy="457.0" rx="20.0" ry="8.0" fill="url(#g20)" style="mix-blend-mode:lighten"/><ellipse cx="33.0" cy="367.0" rx="6.0" ry="8.0" fill="url(#g8)" style="mix-blend-mode:lighten"/><ellipse cx="44.5" cy="372.0" rx="6.0" ry="8.0" fill="url(#g10)" style="mix-blend-mode:lighten"/><ellipse cx="44.5" cy="418.0" rx="6.0" ry="8.0" fill="url(#g8)" style="mix-blend-mode:lighten"/><ellipse cx="42.7" cy="432.0" rx="6.0" ry="8.0" fill="url(#g8)" style="mix-blend-mode:lighten"/><ellipse cx="88.0" cy="475.0" rx="28.0" ry="14.0" fill="url(#g14)" style="mix-blend-mode:lighten" transform="rotate(15 88.0 475.0)"/><ellipse cx="90.1" cy="473.7" rx="20.0" ry="11.0" fill="url(#g22)" style="mix-blend-mode:lighten" transform="rotate(15 90.1 473.7)"/><ellipse cx="90.1" cy="473.7" rx="16.0" ry="8.0" fill="url(#g40)" style="mix-blend-mode:lighten" transform="rotate(15 90.1 473.7)"/><ellipse cx="69.5" cy="488.0" rx="14.0" ry="16.0" fill="url(#g22)" style="mix-blend-mode:lighten"/><ellipse cx="70.0" cy="490.4" rx="9.0" ry="9.0" fill="url(#g40)" style="mix-blend-mode:lighten"/><ellipse cx="68.2" cy="486.0" rx="6.0" ry="6.0" fill="url(#g28)" style="mix-blend-mode:lighten"/><ellipse cx="51.5" cy="476.3" rx="6.0" ry="7.0" fill="url(#g18)" style="mix-blend-mode:lighten"/><ellipse cx="108.0" cy="458.8" rx="28.0" ry="5.0" fill="url(#g28)" style="mix-blend-mode:lighten"/><ellipse cx="113.0" cy="448.0" rx="12.0" ry="6.0" fill="url(#g16)" style="mix-blend-mode:lighten"/><ellipse cx="118.0" cy="492.0" rx="16.0" ry="8.0" fill="url(#g16)" style="mix-blend-mode:lighten"/><ellipse cx="48.0" cy="422.0" rx="20.0" ry="24.0" fill="url(#g4)" style="mix-blend-mode:lighten"/><ellipse cx="33.0" cy="449.0" rx="6.0" ry="8.0" fill="url(#g6)" style="mix-blend-mode:lighten"/><ellipse cx="34.0" cy="466.7" rx="6.0" ry="8.0" fill="url(#g7)" style="mix-blend-mode:lighten"/><ellipse cx="47.0" cy="491.0" rx="6.0" ry="8.0" fill="url(#g10)" style="mix-blend-mode:lighten"/><ellipse cx="50.0" cy="495.0" rx="18.0" ry="6.0" fill="url(#g12)" style="mix-blend-mode:lighten"/><ellipse cx="137.8" cy="272.6" rx="24.0" ry="8.0" fill="url(#g10)" style="mix-blend-mode:lighten" transform="rotate(10 137.8 272.6)"/><ellipse cx="116.0" cy="307.0" rx="16.0" ry="8.0" fill="url(#g6)" style="mix-blend-mode:lighten"/><ellipse cx="153.0" cy="327.0" rx="44.0" ry="8.0" fill="url(#g8)" style="mix-blend-mode:lighten"/><ellipse cx="188.0" cy="340.0" rx="84.0" ry="7.0" fill="url(#g8)" style="mix-blend-mode:lighten"/><ellipse cx="133.0" cy="364.0" rx="48.0" ry="13.0" fill="url(#g15)" style="mix-blend-mode:lighten"/><ellipse cx="132.0" cy="364.0" rx="32.0" ry="10.0" fill="url(#g24)" style="mix-blend-mode:lighten"/><ellipse cx="134.3" cy="362.0" rx="26.0" ry="6.0" fill="url(#g40)" style="mix-blend-mode:lighten"/><ellipse cx="129.0" cy="366.0" rx="28.0" ry="6.0" fill="url(#g40)" style="mix-blend-mode:lighten"/><ellipse cx="150.0" cy="388.0" rx="60.0" ry="11.0" fill="url(#g15)" style="mix-blend-mode:lighten"/><ellipse cx="146.0" cy="388.0" rx="44.0" ry="9.0" fill="url(#g25)" style="mix-blend-mode:lighten"/><ellipse cx="142.0" cy="387.7" rx="30.0" ry="6.4" fill="url(#g35)" style="mix-blend-mode:lighten"/><ellipse cx="178.0" cy="410.0" rx="80.0" ry="12.0" fill="url(#g8)" style="mix-blend-mode:lighten"/><ellipse cx="168.0" cy="407.0" rx="30.0" ry="5.0" fill="url(#g16)" style="mix-blend-mode:lighten"/><ellipse cx="183.0" cy="412.3" rx="60.0" ry="6.0" fill="url(#g16)" style="mix-blend-mode:lighten"/><ellipse cx="113.0" cy="423.0" rx="16.0" ry="10.0" fill="url(#g19)" style="mix-blend-mode:lighten"/><ellipse cx="143.0" cy="428.0" rx="70.0" ry="6.0" fill="url(#g10)" style="mix-blend-mode:lighten"/><ellipse cx="178.0" cy="449.5" rx="100.0" ry="5.0" fill="url(#g18)" style="mix-blend-mode:lighten"/><ellipse cx="208.0" cy="452.0" rx="50.0" ry="6.0" fill="url(#g17)" style="mix-blend-mode:lighten"/><ellipse cx="153.0" cy="455.0" rx="50.0" ry="5.0" fill="url(#g16)" style="mix-blend-mode:lighten"/><ellipse cx="118.0" cy="454.4" rx="16.0" ry="6.0" fill="url(#g26)" style="mix-blend-mode:lighten"/><ellipse cx="158.0" cy="477.0" rx="70.0" ry="6.0" fill="url(#g18)" style="mix-blend-mode:lighten"/><ellipse cx="178.0" cy="486.8" rx="80.0" ry="6.0" fill="url(#g18)" style="mix-blend-mode:lighten"/><ellipse cx="138.0" cy="493.0" rx="90.0" ry="5.0" fill="url(#g16)" style="mix-blend-mode:lighten"/><ellipse cx="258.0" cy="244.0" rx="160.0" ry="8.0" fill="url(#g4)" style="mix-blend-mode:lighten"/><ellipse cx="308.0" cy="257.0" rx="80.0" ry="10.0" fill="url(#g4)" style="mix-blend-mode:lighten"/><ellipse cx="238.0" cy="286.0" rx="100.0" ry="10.0" fill="url(#g6)" style="mix-blend-mode:lighten"/><ellipse cx="268.0" cy="322.5" rx="140.0" ry="6.0" fill="url(#g7)" style="mix-blend-mode:lighten"/><ellipse cx="238.0" cy="340.5" rx="100.0" ry="6.0" fill="url(#g8)" style="mix-blend-mode:lighten"/><ellipse cx="288.0" cy="385.0" rx="120.0" ry="9.0" fill="url(#g6)" style="mix-blend-mode:lighten"/><ellipse cx="228.0" cy="414.0" rx="40.0" ry="6.0" fill="url(#g5)" style="mix-blend-mode:lighten"/><ellipse cx="253.0" cy="450.4" rx="150.0" ry="5.0" fill="url(#g18)" style="mix-blend-mode:lighten"/><ellipse cx="268.0" cy="456.3" rx="120.0" ry="5.0" fill="url(#g14)" style="mix-blend-mode:lighten"/><ellipse cx="278.0" cy="470.0" rx="120.0" ry="6.0" fill="url(#g6)" style="mix-blend-mode:lighten"/><ellipse cx="278.0" cy="494.0" rx="120.0" ry="6.0" fill="url(#g5)" style="mix-blend-mode:lighten"/></g><polyline points="44.6,0.0 46.4,17.0 49.0,38.0 50.8,52.0 52.9,71.0 55.6,92.0 58.0,110.0 61.7,130.0 65.6,151.0 69.0,172.0 71.9,190.0 75.4,210.0 79.2,231.0 82.4,252.0 85.1,270.0 88.6,290.0 91.2,311.0 93.2,332.0 95.2,350.0 99.4,390.0 101.2,411.0 102.5,432.0 103.6,445.0 105.3,464.0 108.3,483.6 111.2,500.0" fill="none" stroke="#f00" stroke-width="5" shape-rendering="crispEdges"/><g stroke="#000" stroke-width="1" stroke-dasharray="1 2" shape-rendering="crispEdges"><line x1="14.5" y1="0" x2="14.5" y2="500"/><line x1="54.5" y1="0" x2="54.5" y2="500"/><line x1="95.5" y1="0" x2="95.5" y2="500"/><line x1="135.5" y1="0" x2="135.5" y2="500"/><line x1="176.5" y1="0" x2="176.5" y2="500"/><line x1="217.5" y1="0" x2="217.5" y2="500"/><line x1="257.5" y1="0" x2="257.5" y2="500"/><line x1="298.5" y1="0" x2="298.5" y2="500"/><line x1="335.5" y1="0" x2="335.5" y2="500"/><line x1="0" y1="92.5" x2="336" y2="92.5"/><line x1="0" y1="194.5" x2="336" y2="194.5"/><line x1="0" y1="296.5" x2="336" y2="296.5"/><line x1="0" y1="397.5" x2="336" y2="397.5"/><line x1="0" y1="499.5" x2="336" y2="499.5"/><line x1="0.5" y1="0" x2="0.5" y2="500"/></g></svg>
<div class="a" style="left:424px;top:29px;width:1px;height:541px;background:#fff"></div>
<svg class="a" style="left:430px;top:4px" width="20" height="18">
<path d="M3.2 11.4 Q4 4.3 10.8 3.6" fill="none" stroke="#f26b1d" stroke-width="1.9" stroke-linecap="round"/>
<path d="M16.4 6.4 Q16 13 9.2 14" fill="none" stroke="#f26b1d" stroke-width="1.9" stroke-linecap="round"/>
<text x="10.4" y="11.8" text-anchor="middle" font-family="Liberation Sans" font-weight="bold" font-size="9.5" fill="#2f6db5">g</text>
</svg>
<div class="a r12" style="left:453px;top:6px;letter-spacing:-0.12px;color:#000">View properties : Velocity Ana...</div>
<div class="a" style="left:640px;top:5px;font-size:13px;line-height:15px">?</div>
<svg class="a" style="left:683px;top:7px" width="12" height="12"><path d="M1 1 L11 11 M11 1 L1 11" stroke="#111" stroke-width="1.1"/></svg>
<div class="a" style="left:425px;top:55px;width:284px;height:520px;background:#fbfbfb;border:1px solid #c9c9c9"></div>
<div class="a" style="left:425px;top:32px;width:48px;height:23px;background:#ececec;border:1px solid #c6c6c6;border-bottom:none;border-radius:3px 3px 0 0"></div>
<div class="a r12" style="left:437px;top:37px;letter-spacing:-0.3px">View</div>
<div class="a" style="left:474px;top:30px;width:60px;height:26px;background:#fbfbfb;border:1px solid #b4b4b4;border-bottom:none;border-radius:3px 3px 0 0"></div>
<div class="a r12" style="left:486px;top:36px;letter-spacing:-0.4px">Vista(s)</div>
<div class="a" style="left:438px;top:68px;width:257px;height:17px;background:#f0f0f0;border:1.5px solid #1a1a1a"></div>
<svg class="a" style="left:442px;top:75px" width="9" height="9"><path d="M8 0 L8 7.6 L0.8 7.6 Z" fill="#111"/></svg>
<div class="a r12" style="left:454px;top:71px;letter-spacing:-0.2px">Vista items</div>
<div class="a" style="left:438px;top:88px;width:258px;height:490px;background:#fff;border:1px solid #c3c3c3"></div>
<div class="a" style="left:439px;top:89px;width:258px;height:19px;background:linear-gradient(#fdfdfd,#f1f1f1);border-bottom:1px solid #d5d5d5"></div>
<div class="a r12" style="left:441px;top:92px">Item name</div>
<svg class="a" style="left:446px;top:114px" width="10" height="6"><path d="M0.5 0.5 L9.5 0.5 L5 5.5 Z" fill="#7a7a7a"/></svg>
<div class="a r12" style="left:467px;top:110px">Vista Items</div>
<svg class="a" style="left:472px;top:129px" width="10" height="6"><path d="M0.5 0.5 L9.5 0.5 L5 5.5 Z" fill="#7a7a7a"/></svg>
<div class="a r12" style="left:492px;top:125px">Layer  #1</div>
<div class="a" style="left:439px;top:173px;width:258px;height:17px;background:#1a7ad4"></div>
<svg class="a" style="left:499px;top:143.5px" width="6" height="9"><path d="M0 0 L4.3 3.6 L0 7.2 Z" fill="#626262"/></svg>
<div class="a" style="left:517px;top:139px;width:15px;height:15px;background:#fff;border:1px solid #b4b4b4"></div>
<svg class="a" style="left:518px;top:140px" width="15" height="15"><path d="M2.4 7.1 L6.6 12.6 L12.8 2.4" fill="none" stroke="#000" stroke-width="2.3" stroke-linejoin="round" stroke-linecap="round"/></svg>
<div class="a r12" style="left:540px;top:140px;color:#000">Current</div>
<svg class="a" style="left:499px;top:160.5px" width="6" height="9"><path d="M0 0 L4.3 3.6 L0 7.2 Z" fill="#626262"/></svg>
<div class="a" style="left:517px;top:156px;width:15px;height:15px;background:#fff;border:1px solid #b4b4b4"></div>
<div class="a r12" style="left:540px;top:157px;color:#000">Velocity base</div>
<svg class="a" style="left:499px;top:177.5px" width="6" height="9"><path d="M0 0 L4.3 3.6 L0 7.2 Z" fill="#24476e"/></svg>
<div class="a" style="left:517px;top:173px;width:15px;height:15px;background:#e8f1fb;border:1px solid #b4b4b4"></div>
<svg class="a" style="left:518px;top:174px" width="15" height="15"><path d="M2.4 7.1 L6.6 12.6 L12.8 2.4" fill="none" stroke="#000" stroke-width="2.3" stroke-linejoin="round" stroke-linecap="round"/></svg>
<div class="a r12" style="left:540px;top:174px;color:#fff">Velocity spectrim in</div>
<svg class="a" style="left:499px;top:194.5px" width="6" height="9"><path d="M0 0 L4.3 3.6 L0 7.2 Z" fill="#626262"/></svg>
<div class="a" style="left:517px;top:190px;width:15px;height:15px;background:#fff;border:1px solid #b4b4b4"></div>
<svg class="a" style="left:518px;top:191px" width="15" height="15"><path d="M2.4 7.1 L6.6 12.6 L12.8 2.4" fill="none" stroke="#000" stroke-width="2.3" stroke-linejoin="round" stroke-linecap="round"/></svg>
<div class="a r12" style="left:540px;top:191px;color:#000">Velocity spectrim out</div>
<svg class="a" style="left:596px;top:70px" width="100" height="16">
<path d="M3.5 8.5 L6 11 L10.5 5.5" fill="none" stroke="#0f52a8" stroke-width="1.6"/>
<g fill="none" stroke="#333" stroke-width="1">
<ellipse cx="27" cy="4" rx="4.5" ry="1.8"/>
<path d="M22.5 4 V12 M31.5 4 V7"/>
<path d="M22.5 7 A4.5 1.8 0 0 0 27 8.8 M22.5 10 A4.5 1.8 0 0 0 27 11.8"/>
</g>
<rect x="27" y="8" width="7" height="6" fill="#333"/>
<rect x="29" y="8.5" width="3" height="2" fill="#f0f0f0"/>
<path d="M48 3 L52 7.5 L49.8 7.5 L49.8 11 L46.2 11 L46.2 7.5 L44 7.5 Z" fill="#0f52a8"/>
<rect x="43" y="12.5" width="2" height="1.6" fill="#222"/><rect x="46.5" y="12.5" width="8" height="1.6" fill="#222"/>
<rect x="64" y="2" width="2" height="1.6" fill="#222"/><rect x="67.5" y="2" width="8" height="1.6" fill="#222"/>
<path d="M70 14 L74 9.5 L71.8 9.5 L71.8 5 L68.2 5 L68.2 9.5 L66 9.5 Z" fill="#0f52a8"/>
<g fill="none" stroke="#444" stroke-width="1">
<path d="M85.5 1.5 Q88 3 89.5 6"/>
<ellipse cx="92" cy="9.5" rx="3.6" ry="4.2" transform="rotate(-40 92 9.5)"/>
<path d="M89.8 7.2 L92 9.4"/>
</g>
</svg>
</body></html>
